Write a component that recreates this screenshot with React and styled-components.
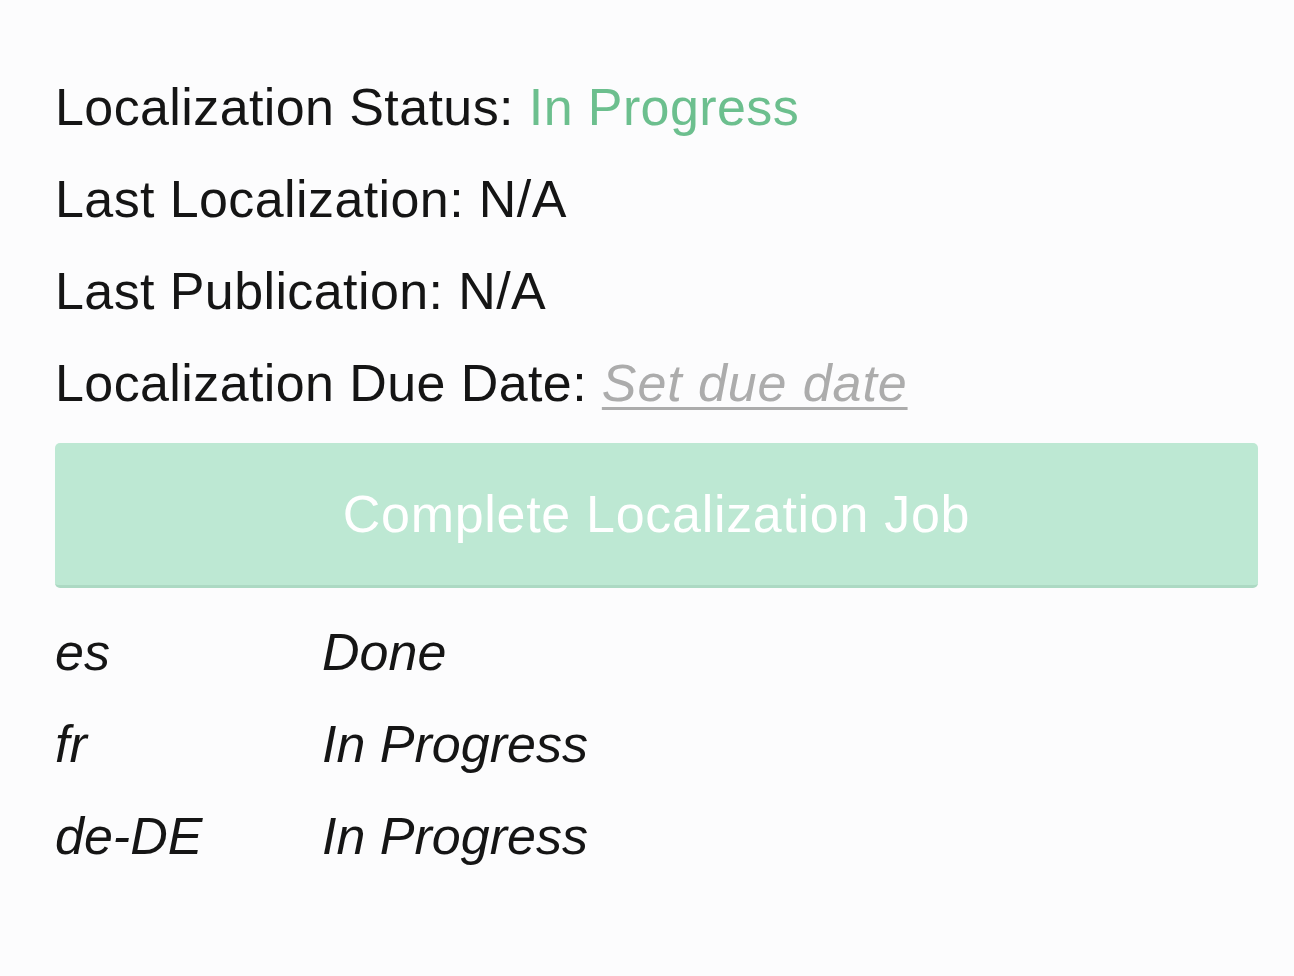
import React from 'react';
import styled, {createGlobalStyle} from 'styled-components';

const locales = [
  {code: 'es', status: 'Done'},
  {code: 'fr', status: 'In Progress'},
  {code: 'de-DE', status: 'In Progress'},
];

const GlobalStyle = createGlobalStyle`
  body {
    margin: 0;
    background: #fcfcfd;
    font-family: "Liberation Sans", Arial, sans-serif;
  }
`

const App = () =>
  <Page>
    <GlobalStyle/>
    <InfoLine>Localization Status: <Status>In Progress</Status></InfoLine>
    <InfoLine>Last Localization: N/A</InfoLine>
    <InfoLine>Last Publication: N/A</InfoLine>
    <InfoLine>Localization Due Date: <DueLink>Set due date</DueLink></InfoLine>
    <CompleteButton disabled>Complete Localization Job</CompleteButton>
    <LocaleTable>
      {locales.map(locale =>
        <LocaleRow key={locale.code}>
          <LocaleCell>{locale.code}</LocaleCell>
          <LocaleCell>{locale.status}</LocaleCell>
        </LocaleRow>
      )}
    </LocaleTable>
  </Page>

const Page = styled.div`
  padding: 61px 36px 0 55px;
  color: #151515;
  font-size: 52px;
`
const InfoLine = styled.div`
  line-height: 92px;
  letter-spacing: 0.4px;
  white-space: nowrap;
`
const Status = styled.span`
  color: #6cbf8e;
`
const DueLink = styled.span`
  color: #acacac;
  font-style: italic;
  letter-spacing: 0.9px;
  text-decoration: underline;
  text-decoration-thickness: 3px;
  text-underline-offset: 6px;
`
const CompleteButton = styled.button`
  display: block;
  width: 100%;
  height: 145px;
  margin-top: 14px;
  background: #bde8d3;
  border: 0;
  border-bottom: 3px solid #acd9c3;
  border-radius: 5px;
  color: #ffffff;
  font-family: inherit;
  font-size: 52px;
  letter-spacing: 0.7px;
`
const LocaleTable = styled.div`
  margin-top: 18px;
  display: flex;
  flex-direction: column;
`
const LocaleRow = styled.div`
  display: grid;
  grid-template-columns: 267px 1fr;
  line-height: 92px;
  font-style: italic;
`
const LocaleCell = styled.div`
  white-space: nowrap;
`

export default App;
